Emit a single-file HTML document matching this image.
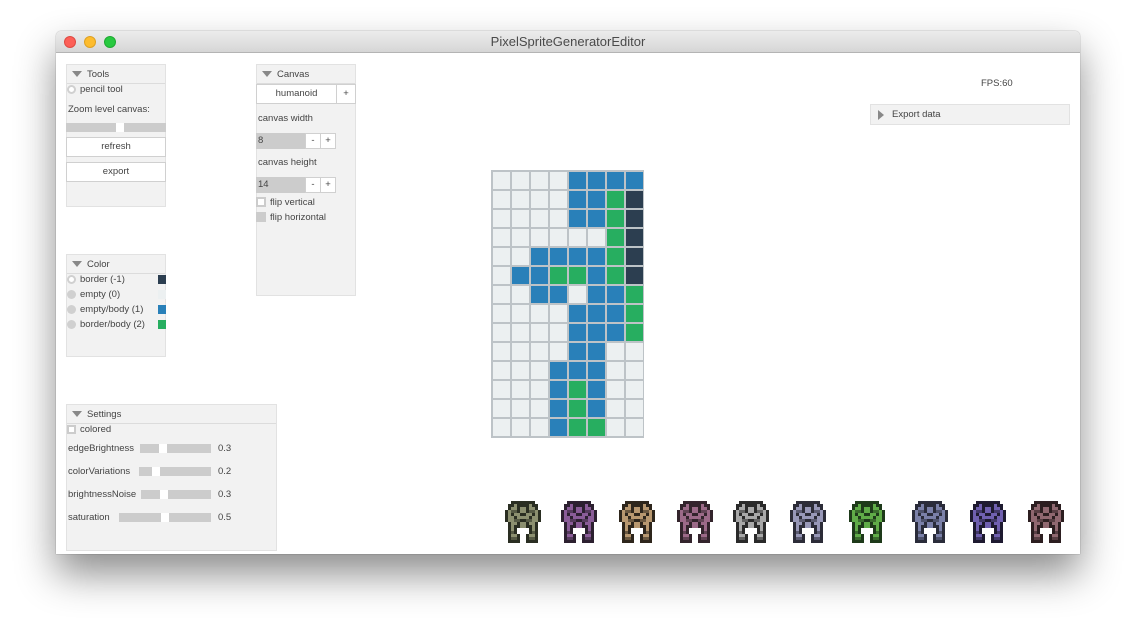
<!DOCTYPE html>
<html><head><meta charset="utf-8"><style>
*{margin:0;padding:0;box-sizing:border-box}
body{width:1136px;height:634px;background:#fff;position:relative;overflow:hidden;font-family:"Liberation Sans",sans-serif;font-size:9.5px;color:#444}
.a{position:absolute}
#win{position:absolute;left:56px;top:31px;width:1024px;height:523px;background:#fff;border-radius:5px 5px 0 0;box-shadow:0 20px 40px rgba(0,0,0,.45),0 0 1px rgba(0,0,0,.5);overflow:hidden}
#title{position:absolute;left:0;top:0;width:1024px;height:22px;background:linear-gradient(#ececec,#d6d6d6);border-bottom:1px solid #b4b4b4;text-align:center;font-size:13px;line-height:22px;color:#4a4a4a}
.dot{position:absolute;top:5px;width:12px;height:12px;border-radius:50%}
.p{position:absolute;background:#f2f2f2;border:1px solid #e2e2e2}
.h{position:absolute;left:0;top:0;right:0;height:19px;border-bottom:1px solid #dcdcdc;padding-left:20px;line-height:19px}
.h:before{content:"";position:absolute;left:5px;top:6px;border-left:5px solid transparent;border-right:5px solid transparent;border-top:6px solid #888}
.btn{position:absolute;background:#fff;border:1px solid #d0d0d0;text-align:center;line-height:17px}
.sl{position:absolute;background:#ccc;height:9px}
.kn{position:absolute;top:0;width:8px;height:9px;background:#fff}
.rad{position:absolute;width:9px;height:9px;border-radius:50%;background:#d0d0d0}
.t{position:absolute;white-space:nowrap;line-height:12px}
#grid{position:absolute;left:491px;top:170px;width:153px;height:268px;background:#bdc3c7;display:grid;grid-template-columns:repeat(8,17px);grid-template-rows:repeat(14,17px);gap:2px;padding:2px}
#grid i{display:block;background:#ecf0f1}
#grid i.b{background:#2980b9}#grid i.g{background:#27ae60}#grid i.d{background:#2c3e50}
</style></head><body>
<div id="win">
<div id="title">PixelSpriteGeneratorEditor
<div class="dot" style="left:8px;background:#fc5f57;border:1px solid #de4a42"></div>
<div class="dot" style="left:28px;background:#fdbc2e;border:1px solid #dea123"></div>
<div class="dot" style="left:48px;background:#28c940;border:1px solid #1fa932"></div>
</div>
</div>
<!-- Tools -->
<div class="p" style="left:66px;top:64px;width:100px;height:143px">
<div class="h">Tools</div>
<div class="rad" style="left:0;top:20px;background:#fff;border:2px solid #d0d0d0"></div>
<div class="t" style="left:13px;top:19px">pencil tool</div>
<div class="t" style="left:1px;top:39px">Zoom level canvas:</div>
<div class="sl" style="left:-1px;top:58px;width:100px"><div class="kn" style="left:50px"></div></div>
<div class="btn" style="left:-1px;top:72px;width:100px;height:20px">refresh</div>
<div class="btn" style="left:-1px;top:97px;width:100px;height:20px">export</div>
</div>
<!-- Canvas -->
<div class="p" style="left:256px;top:64px;width:100px;height:232px">
<div class="h">Canvas</div>
<div class="btn" style="left:-1px;top:19px;width:81px;height:20px">humanoid</div>
<div class="btn" style="left:79px;top:19px;width:20px;height:20px">+</div>
<div class="t" style="left:1px;top:48px">canvas width</div>
<div class="sl" style="left:-1px;top:68px;width:50px;height:16px;padding-left:2px;line-height:16px">8</div>
<div class="btn" style="left:48px;top:68px;width:16px;height:16px;line-height:14px">-</div>
<div class="btn" style="left:63px;top:68px;width:16px;height:16px;line-height:14px">+</div>
<div class="t" style="left:1px;top:92px">canvas height</div>
<div class="sl" style="left:-1px;top:112px;width:50px;height:16px;padding-left:2px;line-height:16px">14</div>
<div class="btn" style="left:48px;top:112px;width:16px;height:16px;line-height:14px">-</div>
<div class="btn" style="left:63px;top:112px;width:16px;height:16px;line-height:14px">+</div>
<div class="a" style="left:-1px;top:132px;width:10px;height:10px;background:#fff;border:2px solid #ccc"></div>
<div class="t" style="left:13px;top:132px">flip vertical</div>
<div class="a" style="left:-1px;top:147px;width:10px;height:10px;background:#ccc"></div>
<div class="t" style="left:13px;top:147px">flip horizontal</div>
</div>
<!-- Color -->
<div class="p" style="left:66px;top:254px;width:100px;height:103px">
<div class="h">Color</div>
<div class="rad" style="left:0;top:20px;background:#fff;border:2px solid #d0d0d0"></div><div class="t" style="left:13px;top:19px">border (-1)</div><div class="a" style="left:91px;top:20px;width:8px;height:9px;background:#2c3e50"></div>
<div class="rad" style="left:0;top:35px"></div><div class="t" style="left:13px;top:34px">empty (0)</div><div class="a" style="left:91px;top:35px;width:8px;height:9px;background:#ecf0f1"></div>
<div class="rad" style="left:0;top:50px"></div><div class="t" style="left:13px;top:49px">empty/body (1)</div><div class="a" style="left:91px;top:50px;width:8px;height:9px;background:#2980b9"></div>
<div class="rad" style="left:0;top:65px"></div><div class="t" style="left:13px;top:64px">border/body (2)</div><div class="a" style="left:91px;top:65px;width:8px;height:9px;background:#27ae60"></div>
</div>
<!-- Settings -->
<div class="p" style="left:66px;top:404px;width:211px;height:147px">
<div class="h">Settings</div>
<div class="a" style="left:0;top:20px;width:9px;height:9px;background:#fff;border:2px solid #ccc"></div>
<div class="t" style="left:13px;top:19px">colored</div>
<div class="t" style="left:1px;top:38px">edgeBrightness</div><div class="sl" style="left:73px;top:39px;width:71px"><div class="kn" style="left:19px"></div></div><div class="t" style="left:151px;top:38px">0.3</div>
<div class="t" style="left:1px;top:61px">colorVariations</div><div class="sl" style="left:72px;top:62px;width:72px"><div class="kn" style="left:13px"></div></div><div class="t" style="left:151px;top:61px">0.2</div>
<div class="t" style="left:1px;top:84px">brightnessNoise</div><div class="sl" style="left:74px;top:85px;width:70px"><div class="kn" style="left:19px"></div></div><div class="t" style="left:151px;top:84px">0.3</div>
<div class="t" style="left:1px;top:107px">saturation</div><div class="sl" style="left:52px;top:108px;width:92px"><div class="kn" style="left:42px"></div></div><div class="t" style="left:151px;top:107px">0.5</div>
</div>
<div class="t" style="left:981px;top:78px">FPS:60</div>
<div class="p" style="left:870px;top:104px;width:200px;height:21px">
<div class="t" style="left:21px;top:4px">Export data</div>
<div class="a" style="left:7px;top:5px;border-top:5px solid transparent;border-bottom:5px solid transparent;border-left:6px solid #888"></div>
</div>
<div id="grid">
<i></i><i></i><i></i><i></i><i class="b"></i><i class="b"></i><i class="b"></i><i class="b"></i>
<i></i><i></i><i></i><i></i><i class="b"></i><i class="b"></i><i class="g"></i><i class="d"></i>
<i></i><i></i><i></i><i></i><i class="b"></i><i class="b"></i><i class="g"></i><i class="d"></i>
<i></i><i></i><i></i><i></i><i></i><i></i><i class="g"></i><i class="d"></i>
<i></i><i></i><i class="b"></i><i class="b"></i><i class="b"></i><i class="b"></i><i class="g"></i><i class="d"></i>
<i></i><i class="b"></i><i class="b"></i><i class="g"></i><i class="g"></i><i class="b"></i><i class="g"></i><i class="d"></i>
<i></i><i></i><i class="b"></i><i class="b"></i><i></i><i class="b"></i><i class="b"></i><i class="g"></i>
<i></i><i></i><i></i><i></i><i class="b"></i><i class="b"></i><i class="b"></i><i class="g"></i>
<i></i><i></i><i></i><i></i><i class="b"></i><i class="b"></i><i class="b"></i><i class="g"></i>
<i></i><i></i><i></i><i></i><i class="b"></i><i class="b"></i><i></i><i></i>
<i></i><i></i><i></i><i class="b"></i><i class="b"></i><i class="b"></i><i></i><i></i>
<i></i><i></i><i></i><i class="b"></i><i class="g"></i><i class="b"></i><i></i><i></i>
<i></i><i></i><i></i><i class="b"></i><i class="g"></i><i class="b"></i><i></i><i></i>
<i></i><i></i><i></i><i class="b"></i><i class="g"></i><i class="g"></i><i></i><i></i>
</div>
<svg class="a" style="left:0;top:0" width="1136" height="634" shape-rendering="crispEdges">
<defs><symbol id="sp" viewBox="0 0 12 14">
<path fill="currentColor" d="M1 1h10v2H1zM0 3h12v4H0zM1 7h10v2H1zM1 9h3v2H1zM8 9h3v2H8zM1 11h4v3H1zM7 11h4v3H7z"/>
<path opacity=".55" d="M2 3h2v1H2zM8 3h2v1H8zM3 6h2v1H3zM7 6h2v1H7zM2 10h1v1H2zM9 10h1v1H9zM2 12h2v1H2zM8 12h2v1H8z"/>
<path d="M2 0h8v1H2zM1 1h2v1H1zM4 1h4v1H4zM9 1h2v1H9zM1 2h1v1H1zM4 2h1v1H4zM7 2h1v1H7zM10 2h1v1h-1zM0 3h1v1H0zM4 3h1v1H4zM7 3h1v1H7zM11 3h1v1h-1zM0 4h1v1H0zM2 4h1v1H2zM5 4h2v1H5zM9 4h1v1H9zM11 4h1v1h-1zM0 5h1v1H0zM3 5h1v1H3zM8 5h1v1H8zM11 5h1v1h-1zM0 6h1v1H0zM5 6h2v1H5zM11 6h1v1h-1zM1 7h1v1H1zM4 7h1v1H4zM7 7h1v1H7zM10 7h1v1h-1zM1 8h1v1H1zM3 8h2v1H3zM7 8h2v1H7zM10 8h1v1h-1zM1 9h1v2H1zM3 9h1v2H3zM8 9h1v2H8zM10 9h1v2h-1zM1 11h1v2H1zM4 11h1v2H4zM7 11h1v2H7zM10 11h1v2h-1zM1 13h4v1H1zM7 13h4v1H7z"/>
</symbol></defs>
<use href="#sp" x="505" y="501" width="36" height="42" fill="#2a2e22" color="#8c9070"/>
<use href="#sp" x="561" y="501" width="36" height="42" fill="#2c2030" color="#8a5c98"/>
<use href="#sp" x="619" y="501" width="36" height="42" fill="#2e261c" color="#b89870"/>
<use href="#sp" x="677" y="501" width="36" height="42" fill="#33242c" color="#9c6a88"/>
<use href="#sp" x="733" y="501" width="36" height="42" fill="#2a2a2a" color="#a8a8a8"/>
<use href="#sp" x="790" y="501" width="36" height="42" fill="#2c2c38" color="#9898b8"/>
<use href="#sp" x="849" y="501" width="36" height="42" fill="#1e3a1a" color="#60ac48"/>
<use href="#sp" x="912" y="501" width="36" height="42" fill="#2a2c3a" color="#7a80a8"/>
<use href="#sp" x="970" y="501" width="36" height="42" fill="#1e1a30" color="#7060b0"/>
<use href="#sp" x="1028" y="501" width="36" height="42" fill="#2c1e20" color="#906870"/>
</svg>
</body></html>
